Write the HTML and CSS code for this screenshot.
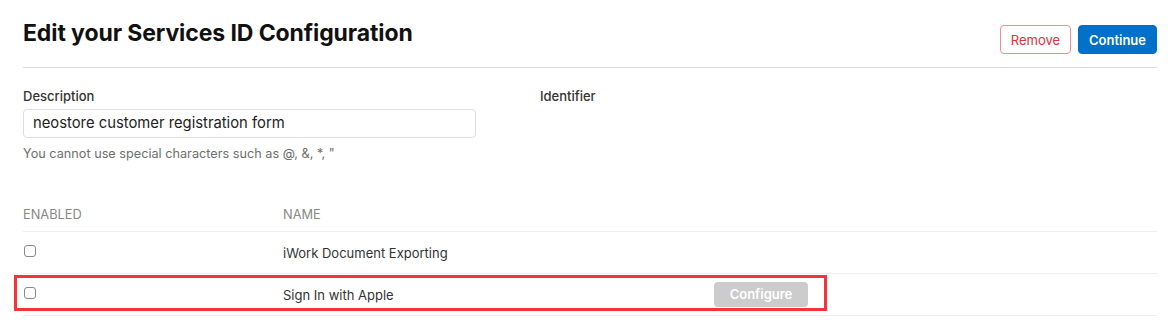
FILE: index.html
```html
<!DOCTYPE html>
<html lang="en">
<head>
    <meta charset="UTF-8">
    <meta name="viewport" content="width=device-width, initial-scale=1.0">
    <title>Edit your Services ID Configuration</title>
    <link rel="stylesheet" href="styles.css">
</head>
<body>

    <!-- Page Header -->
    <div class="page-header">
        <h1 class="title">Edit your Services ID Configuration</h1>
        <div class="actions">
            <button class="btn btn-remove">Remove</button>
            <button class="btn btn-continue">Continue</button>
        </div>
    </div>

    <!-- Description / Identifier -->
    <div class="form-row">
        <div class="field field-description">
            <label class="field-label" for="description">Description</label>
            <input class="text-input" id="description" type="text" value="neostore customer registration form">
            <p class="hint">You cannot use special characters such as @, &amp;, *, "</p>
        </div>
        <div class="field field-identifier">
            <span class="field-label">Identifier</span>
        </div>
    </div>

    <!-- Capabilities -->
    <div class="services">
        <div class="services-head">
            <span class="col-enabled">Enabled</span>
            <span class="col-name">Name</span>
        </div>
        <div class="service-row">
            <span class="col-enabled"><input class="check" type="checkbox"></span>
            <span class="col-name">iWork Document Exporting</span>
        </div>
        <div class="service-row highlighted">
            <span class="col-enabled"><input class="check" type="checkbox"></span>
            <span class="col-name">Sign In with Apple</span>
            <button class="btn btn-configure" disabled>Configure</button>
            <div class="highlight-box"></div>
        </div>
    </div>

</body>
</html>
```

FILE: styles.css
```css
/* Base */
body {
    margin: 0;
    padding: 0 11px 0 23px;
    background: #fff;
    color: #333;
    font-family: Inter, "Noto Sans", sans-serif;
    font-size: 13px;
}

/* Header */
.page-header {
    display: flex;
    justify-content: space-between;
    align-items: flex-start;
    padding: 19px 0 13px;
    border-bottom: 1px solid #dcdcdc;
}

.title {
    margin: 0;
    font-size: 23px;
    line-height: 29px;
    font-weight: 700;
    color: #111;
    letter-spacing: -0.1px;
}

.actions {
    display: flex;
    gap: 7px;
    margin-top: 6px;
}

.btn {
    font-family: inherit;
    font-size: 13px;
    height: 29px;
    border-radius: 4px;
    cursor: pointer;
}

.btn-remove {
    width: 71px;
    background: #fff;
    color: #e0303c;
    border: 1px solid #ee8f98;
}

.btn-continue {
    width: 79px;
    background: #0070c9;
    color: #fff;
    border: 1px solid #0070c9;
    font-weight: 600;
}

/* Form */
.form-row {
    display: flex;
    padding-top: 20px;
}

.field-description {
    width: 517px;
}

.field-label {
    display: block;
    font-size: 13px;
    line-height: 16px;
    font-weight: 500;
    color: #333;
}

.text-input {
    display: block;
    box-sizing: border-box;
    width: 453px;
    height: 29px;
    margin-top: 5px;
    padding: 0 10px 1px 9px;
    border: 1px solid #dedede;
    border-radius: 4px;
    font-family: inherit;
    font-size: 14.8px;
    color: #222;
}

.hint {
    margin: 8px 0 0;
    font-size: 12.7px;
    line-height: 16px;
    color: #6e6e6e;
}

/* Services table */
.services {
    margin-top: 45px;
}

.services-head {
    display: flex;
    padding-bottom: 8px;
    border-bottom: 1px solid #eee;
    font-size: 12.8px;
    line-height: 16px;
    text-transform: uppercase;
    color: #888;
}

.col-enabled {
    width: 260px;
}

.col-name {
    width: 431px;
}

.service-row {
    position: relative;
    display: flex;
    align-items: center;
    min-height: 41px;
    border-bottom: 1px solid #eee;
    color: #333;
    line-height: 18px;
}

.service-row .col-enabled {
    align-self: flex-start;
    padding-top: 13px;
}

.check {
    appearance: none;
    display: block;
    width: 12px;
    height: 12px;
    margin: 0 0 0 1px;
    border: 1px solid #8a8a8a;
    border-radius: 3px;
    background: #fff;
}

.btn-configure {
    width: 94px;
    height: 25px;
    margin-top: -1px;
    background: #cccccc;
    color: #fff;
    border: none;
    font-weight: 600;
    font-size: 13px;
}

/* Annotation box */
.highlight-box {
    position: absolute;
    left: -9px;
    top: 1px;
    width: 813px;
    height: 36px;
    box-sizing: border-box;
    border: 3px solid #f53338;
}
```
